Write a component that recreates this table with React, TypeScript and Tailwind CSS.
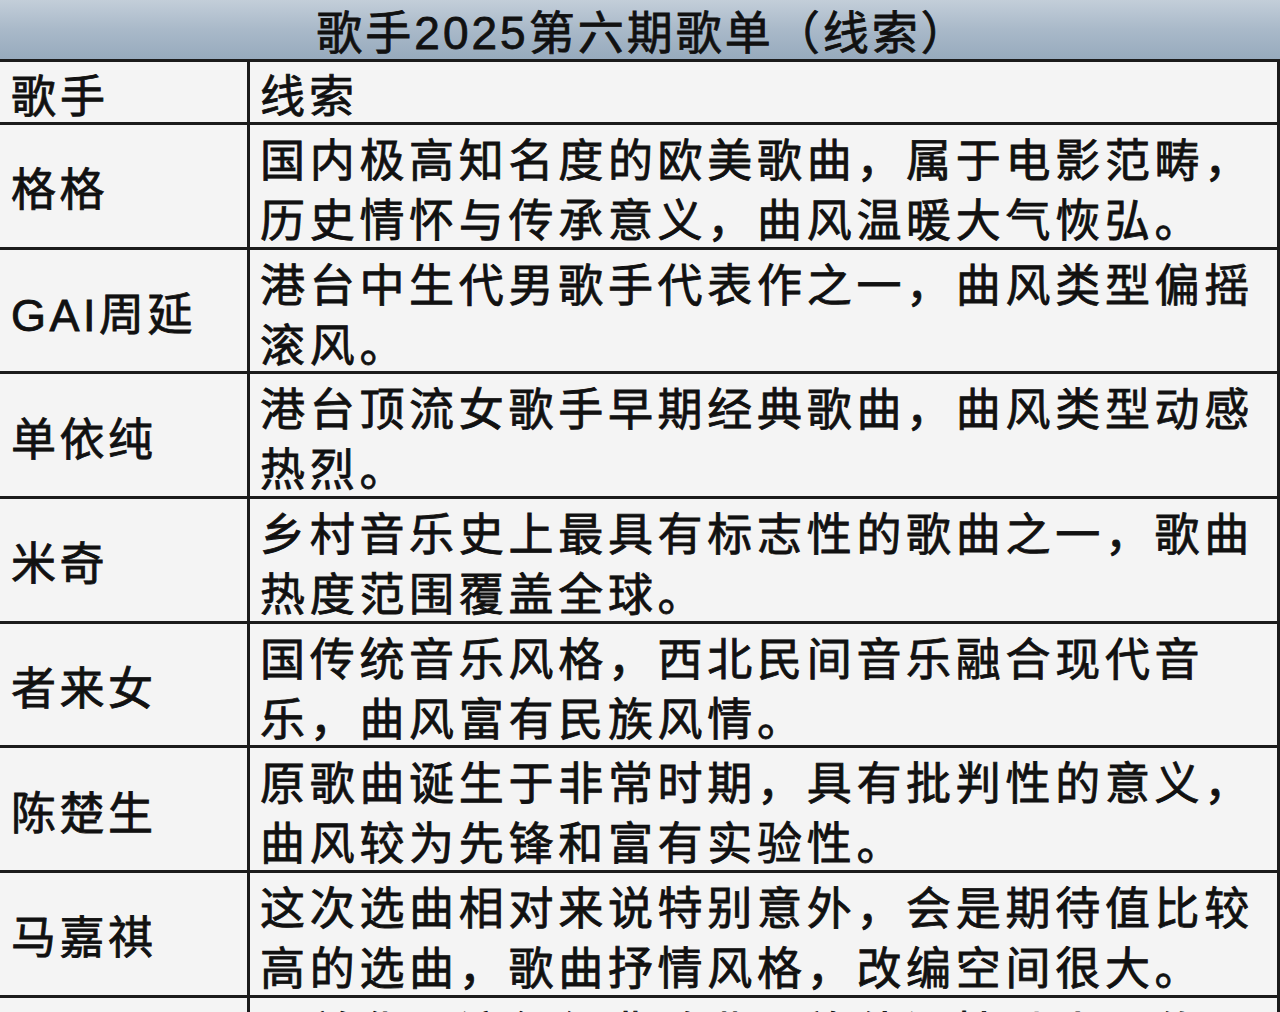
import React from "react";

type Row = { name: string; lines: string[] };

const rows: Row[] = [
  { name: "格格", lines: ["国内极高知名度的欧美歌曲，属于电影范畴，", "历史情怀与传承意义，曲风温暖大气恢弘。"] },
  { name: "GAI周延", lines: ["港台中生代男歌手代表作之一，曲风类型偏摇", "滚风。"] },
  { name: "单依纯", lines: ["港台顶流女歌手早期经典歌曲，曲风类型动感", "热烈。"] },
  { name: "米奇", lines: ["乡村音乐史上最具有标志性的歌曲之一，歌曲", "热度范围覆盖全球。"] },
  { name: "者来女", lines: ["国传统音乐风格，西北民间音乐融合现代音", "乐，曲风富有民族风情。"] },
  { name: "陈楚生", lines: ["原歌曲诞生于非常时期，具有批判性的意义，", "曲风较为先锋和富有实验性。"] },
  { name: "马嘉祺", lines: ["这次选曲相对来说特别意外，会是期待值比较", "高的选曲，歌曲抒情风格，改编空间很大。"] },
  { name: "", lines: ["一首华语流行经典歌曲，旋律深情动人，传唱", "度很高。"] },
];

export default function App() {
  return (
    <div className="w-[1280px] h-[1012px] overflow-hidden bg-[#f4f4f4] text-[#111] font-['Liberation_Sans','Noto_Sans_CJK_SC',sans-serif] font-normal [-webkit-text-stroke:0.8px_#111]">
      <div className="h-[62px] border-b-[3px] border-[#1c1c1c] bg-gradient-to-b from-[#c3ced9] via-[#a9b9c9] to-[#97aabd] flex items-center justify-center">
        <span className="text-[46px] leading-none tracking-[3px] pt-[6px] pl-[6px]">歌手2025第六期歌单（线索）</span>
      </div>
      <div className="flex h-[63px] border-b-[3px] border-[#1c1c1c] border-r-[3px]">
        <div className="w-[250px] shrink-0 border-r-[3px] border-[#1c1c1c] flex items-center pl-[11px] pt-[10px] text-[45px] tracking-[4px] leading-none">
          歌手
        </div>
        <div className="flex-1 flex items-center pl-[10px] pt-[10px] text-[45px] tracking-[4px] leading-none">
          线索
        </div>
      </div>
      {rows.map((r, i) => (
        <div key={i} className="flex h-[124.7px] shrink-0 border-b-[3px] border-[#1c1c1c] border-r-[3px]">
          <div className="w-[250px] shrink-0 border-r-[3px] border-[#1c1c1c] flex items-center pl-[11px] pt-[10px] text-[45px] tracking-[3.5px] leading-none whitespace-nowrap">
            {r.name}
          </div>
          <div className="flex-1 flex flex-col gap-[10px] pl-[10px] pt-[12px] text-[45px] tracking-[4.7px] leading-[50px] whitespace-nowrap">
            {r.lines.map((l, j) => (
              <div key={j}>{l}</div>
            ))}
          </div>
        </div>
      ))}
    </div>
  );
}
